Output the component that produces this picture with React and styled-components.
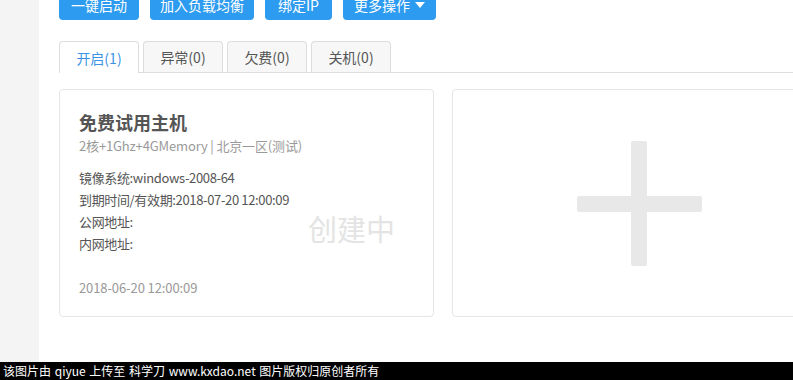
import styled, { createGlobalStyle } from "styled-components";

const GlobalStyle = createGlobalStyle`
  html, body {
    margin: 0;
    padding: 0;
    overflow: hidden;
    background: #fff;
  }
  body {
    font-family: "Noto Sans CJK SC", "Liberation Sans", sans-serif;
  }
`;

const Page = styled.div`
  width: 793px;
  height: 380px;
  display: flex;
  flex-direction: column;
  overflow: hidden;
`;

const Body = styled.div`
  flex: 1;
  display: flex;
  min-height: 0;
`;

const Sidebar = styled.div`
  width: 39px;
  flex-shrink: 0;
  background: #f4f4f4;
`;

const Main = styled.div`
  flex: 1;
  padding-left: 20px;
  overflow: hidden;
`;

const Toolbar = styled.div`
  display: flex;
  gap: 11px;
  margin-top: -10px;
`;

const Button = styled.div`
  width: ${(p) => p.$w}px;
  height: 30px;
  display: flex;
  align-items: center;
  justify-content: center;
  gap: 5px;
  background: #2d9bf0;
  color: #fff;
  font-size: 14px;
  border-radius: 4px;
  white-space: nowrap;
`;

const Caret = styled.span`
  width: 0;
  height: 0;
  border-left: 5px solid transparent;
  border-right: 5px solid transparent;
  border-top: 6px solid #fff;
`;

const Tabs = styled.div`
  display: flex;
  gap: 4px;
  margin-top: 21px;
  border-bottom: 1px solid #dddddd;
  height: 31px;
`;

const Tab = styled.div`
  width: 80px;
  box-sizing: border-box;
  display: flex;
  align-items: center;
  justify-content: center;
  font-size: 14px;
  border: 1px solid #dddddd;
  border-bottom: none;
  border-radius: 4px 4px 0 0;
  background: ${(p) => (p.$active ? "#fff" : "#f7f7f7")};
  color: ${(p) => (p.$active ? "#3a93e6" : "#555")};
  height: ${(p) => (p.$active ? "32px" : "31px")};
`;

const Cards = styled.div`
  display: flex;
  gap: 18px;
  margin-top: 16px;
`;

const Card = styled.div`
  position: relative;
  width: 375px;
  height: 228px;
  box-sizing: border-box;
  flex-shrink: 0;
  border: 1px solid #e6e6e6;
  border-radius: 4px;
  background: #fff;
  padding: 20px 19px;
`;

const Title = styled.div`
  font-size: 18px;
  line-height: 24px;
  font-weight: bold;
  color: #555;
`;

const Sub = styled.div`
  margin-top: 2px;
  font-size: 13px;
  line-height: 20px;
  color: #999;
  letter-spacing: -0.15px;
`;

const InfoList = styled.div`
  margin-top: 11px;
`;

const Info = styled.div`
  font-size: 13px;
  line-height: 22px;
  color: #555;
  letter-spacing: -0.35px;
`;

const DateLine = styled.div`
  margin-top: 23px;
  font-size: 13px;
  line-height: 20px;
  color: #999;
  letter-spacing: -0.1px;
`;

const Status = styled.div`
  position: absolute;
  right: 38px;
  top: 118px;
  font-size: 29px;
  line-height: 40px;
  color: #e4e4e4;
`;

const AddCard = styled(Card)`
  display: flex;
  align-items: center;
  justify-content: center;
  padding: 0;
`;

const Plus = styled.div`
  position: relative;
  width: 125px;
  height: 125px;
  &::before,
  &::after {
    content: "";
    position: absolute;
    background: #e8e8e8;
    border-radius: 2px;
  }
  &::before {
    left: 54px;
    top: 0;
    width: 16px;
    height: 125px;
  }
  &::after {
    left: 0;
    top: 55px;
    width: 125px;
    height: 16px;
  }
`;

const Watermark = styled.div`
  height: 18px;
  flex-shrink: 0;
  background: #000;
  color: #fff;
  font-size: 12px;
  line-height: 18px;
  padding-left: 3px;
  white-space: pre;
  word-spacing: 1px;
`;

const tabs = [
  { label: "开启(1)", active: true },
  { label: "异常(0)" },
  { label: "欠费(0)" },
  { label: "关机(0)" },
];

export default function App() {
  return (
    <Page>
      <GlobalStyle />
      <Body>
        <Sidebar />
        <Main>
          <Toolbar>
            <Button $w={80}>一键启动</Button>
            <Button $w={104}>加入负载均衡</Button>
            <Button $w={67}>绑定IP</Button>
            <Button $w={93}>
              更多操作 <Caret />
            </Button>
          </Toolbar>
          <Tabs>
            {tabs.map((t) => (
              <Tab key={t.label} $active={t.active}>
                {t.label}
              </Tab>
            ))}
          </Tabs>
          <Cards>
            <Card>
              <Title>免费试用主机</Title>
              <Sub>2核+1Ghz+4GMemory | 北京一区(测试)</Sub>
              <InfoList>
                <Info>镜像系统:windows-2008-64</Info>
                <Info>到期时间/有效期:2018-07-20 12:00:09</Info>
                <Info>公网地址:</Info>
                <Info>内网地址:</Info>
              </InfoList>
              <DateLine>2018-06-20 12:00:09</DateLine>
              <Status>创建中</Status>
            </Card>
            <AddCard>
              <Plus />
            </AddCard>
          </Cards>
        </Main>
      </Body>
      <Watermark>该图片由 qiyue 上传至 科学刀 www.kxdao.net 图片版权归原创者所有</Watermark>
    </Page>
  );
}
